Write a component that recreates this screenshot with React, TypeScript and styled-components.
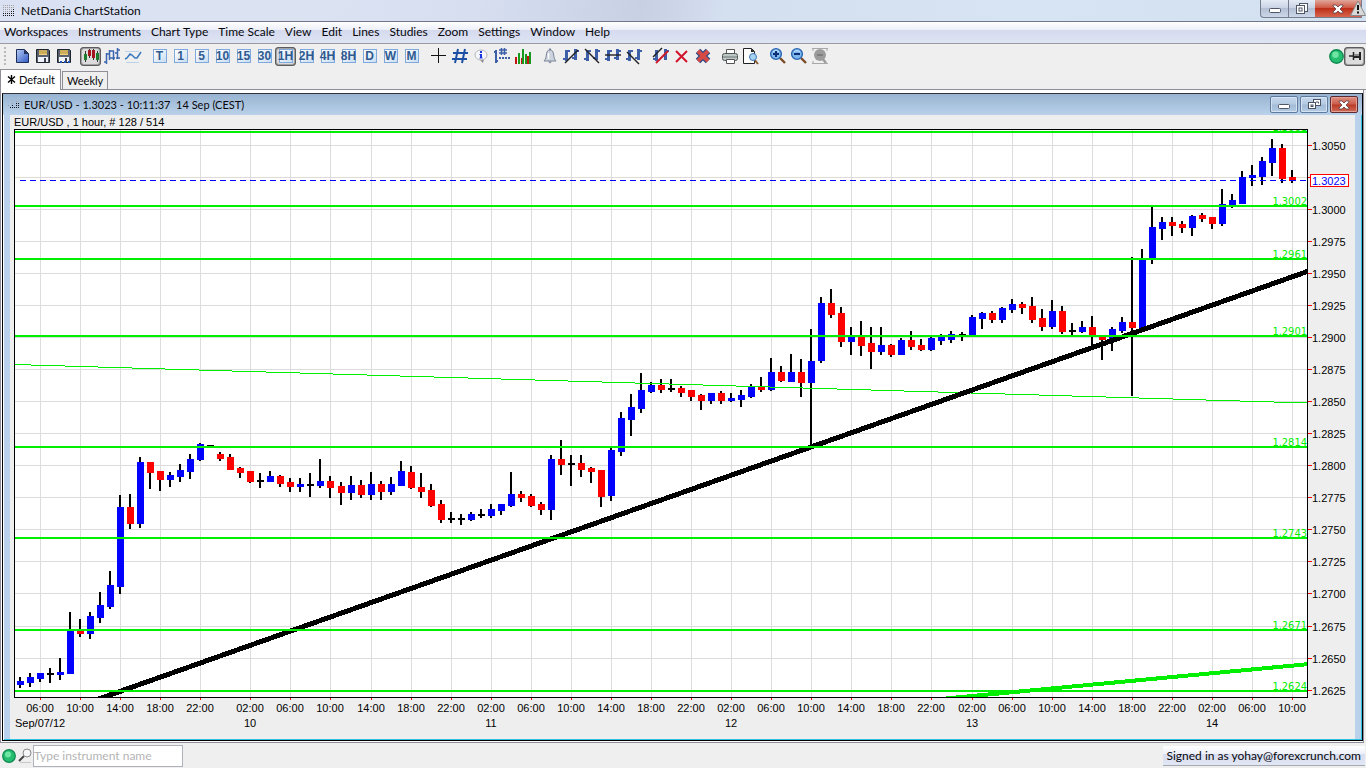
import React from 'react';
import styled, { createGlobalStyle, css } from 'styled-components';

const uiFont = 'Lato, "Open Sans", sans-serif';
const chartFont = '"Liberation Sans", Arial, sans-serif';

const GlobalStyle = createGlobalStyle`
  *, *::before, *::after { box-sizing: border-box; }
  body { margin: 0; background: #efefef; }
  button, input { font: inherit; color: inherit; margin: 0; }
`;

const Shell = styled.div`
  display: flex;
  flex-direction: column;
  min-height: 100vh;
  background: #efefef;
  color: #08080c;
  font: 12px/16px ${uiFont};
`;

const TitleBar = styled.header`
  display: flex;
  align-items: flex-start;
  height: 22px;
  padding-left: 3px;
  border-bottom: 1px solid #70758a;
  background: linear-gradient(100deg, #d9e1f2 0%, #dbe3f3 22%, #d6def0 35%, #c8d0e4 47%, #d4dff0 53%, #d7e4f3 75%, #d3e0f0 100%);
`;

const AppTitle = styled.h1`
  flex: 1;
  margin: 3px 0 0 6px;
  font-size: 12px;
  font-weight: 400;
  line-height: 16px;
`;

const WindowButtons = styled.div`
  position: relative;
  display: flex;
  height: 18px;
  padding-right: 4px;
`;

const WindowButton = styled.button<{ $w: number; $danger?: boolean }>`
  display: flex;
  align-items: center;
  justify-content: center;
  width: ${p => p.$w}px;
  height: 18px;
  padding: 0;
  border: 1px solid #747c8e;
  border-top: 0;
  border-left-width: ${p => (p.$danger ? 0 : 1)}px;
  border-right-width: ${p => (p.$danger ? 1 : 0)}px;
  background: ${p =>
    p.$danger
      ? 'linear-gradient(#e0a79c, #cf5a45 45%, #bd2f18 50%, #d8654e)'
      : 'linear-gradient(#e4ebf6, #c9d3e4 45%, #b3bfd4 50%, #ccd7e8)'};
  &:first-child { border-bottom-left-radius: 4px; }
`;

const Warning = styled.svg`
  position: absolute;
  right: 0;
  top: 0;
`;

const MenuBar = styled.nav`
  display: flex;
  align-items: center;
  gap: 10px;
  height: 22px;
  padding: 0 4px 1px;
  border-bottom: 1px solid #9a9aa2;
  background: linear-gradient(#ffffff, #eef0f9 36%, #d5daee 40%, #dfe4f4 100%);
`;

const MenuItem = styled.button`
  padding: 0;
  border: 0;
  background: none;
  line-height: 20px;
  white-space: nowrap;
`;

const ToolBar = styled.div`
  display: flex;
  align-items: center;
  gap: 6px;
  height: 25px;
  padding: 0 1px 1px 4px;
`;

const Grip = styled.span`
  width: 2px;
  height: 19px;
  margin-right: -1px;
  background: repeating-linear-gradient(#b9b9b9 0 2px, transparent 2px 4px);
`;

const ToolGroup = styled.div<{ $end?: boolean }>`
  display: flex;
  align-items: center;
  ${p => p.$end && css`margin-left: auto;`}
`;

const ToolButton = styled.button<{ $on?: boolean }>`
  display: flex;
  align-items: center;
  justify-content: center;
  width: 21px;
  height: 19px;
  padding: 0;
  border: 0;
  border-radius: 4px;
  background: ${p => (p.$on ? '#dcdcdc' : 'none')};
  box-shadow: ${p => (p.$on ? 'inset 0 0 0 1px #5c5c5c, inset 0 0 0 2px #a2a2a2' : 'none')};
`;

const PeriodTile = styled.span`
  display: flex;
  justify-content: center;
  width: 14px;
  height: 14px;
  border: 1px solid #7fa9dc;
  background: linear-gradient(135deg, #ffffff, #c9ddf2);
  color: #2f5a90;
  font: 700 12px/12px ${chartFont};
`;

const TabStrip = styled.div`
  display: flex;
  align-items: flex-end;
  height: 21px;
  box-shadow: inset 0 -1px 0 #8e8f98;
`;

const Tab = styled.button<{ $active?: boolean }>`
  display: flex;
  align-items: center;
  gap: 3px;
  height: 19px;
  margin-left: 1px;
  padding: 1px 4px 0;
  font-size: 11px;
  line-height: 16px;
  border: 1px solid #8e8f98;
  background: #efefef;
  ${p =>
    p.$active &&
    css`
      height: 21px;
      margin-left: 0;
      padding: 0 5px 1px 6px;
      border-bottom: 0;
      background: #fff;
    `}
`;

const Workspace = styled.main`
  flex: 1;
  display: flex;
  margin-right: 2px;
  padding: 3px 0 1px 1px;
  border: 1px solid #8e8f98;
  border-top: 0;
  background: #fff;
`;

const ChartWindow = styled.section`
  flex: 1;
  display: flex;
  flex-direction: column;
  border: 1px solid #000;
  border-top-color: #30333c;
  background: #b9d1ea;
  box-shadow: inset 1px 0 0 #fff, inset -1px -1px 0 #2cc3e0;
`;

const ChartHeader = styled.div`
  display: flex;
  align-items: center;
  height: 21px;
  padding: 0 4px 0 5px;
  background: linear-gradient(#99b4d1, #b9d1ea);
`;

const ChartTitle = styled.h2`
  flex: 1;
  margin: 0 0 0 4px;
  font-size: 11px;
  font-weight: 400;
  line-height: 20px;
  white-space: pre;
`;

const FrameButton = styled.button<{ $danger?: boolean }>`
  display: flex;
  align-items: center;
  justify-content: center;
  width: 28px;
  height: 17px;
  margin-left: 2px;
  padding: 0;
  border: 1px solid ${p => (p.$danger ? '#5d2a30' : '#5f7a9c')};
  border-radius: 2px;
  box-shadow: inset 0 0 0 1px ${p => (p.$danger ? '#e2a096' : '#d5e4f3')};
  background: ${p =>
    p.$danger
      ? 'linear-gradient(#dd9083, #cd5c4a 48%, #b83a27 52%, #cf6a55)'
      : 'linear-gradient(#c6d8ec, #b5cae2 48%, #a2bad6 52%, #b5cbe4)'};
`;

const ChartBody = styled.div`
  flex: 1;
  margin: 0 7px 1px;
  background: #eeeeee;
`;

const ChartSvg = styled.svg`
  display: block;
  width: 100%;
  height: auto;
  font: 11px ${chartFont};
`;

const StatusBar = styled.footer`
  display: flex;
  align-items: center;
  height: 25px;
  padding: 0 1px 0 2px;
`;

const SearchLabel = styled.label`
  display: flex;
  margin: 0 0 0 2px;
`;

const SearchInput = styled.input`
  width: 150px;
  height: 22px;
  padding: 0;
  border: 1px solid #aeb0ba;
  background: #fff;
  outline: 0;
  &::placeholder { color: #b4b4b4; opacity: 1; }
`;

const Account = styled.span`
  margin-left: auto;
  height: 20px;
  padding: 0 4px;
  line-height: 20px;
  border-bottom: 1px solid #a6a8b2;
  background: linear-gradient(#ffffff, #eef0f9 40%, #d9def0 45%, #e2e7f5);
`;

const menus = ['Workspaces', 'Instruments', 'Chart Type', 'Time Scale', 'View', 'Edit', 'Lines', 'Studies', 'Zoom', 'Settings', 'Window', 'Help'];
const periods = ['T', '1', '5', '10', '15', '30', '1H', '2H', '4H', '8H', 'D', 'W', 'M'];

/* ---------- icons ---------- */

const Icon = ({ children }: { children: React.ReactNode }) => (
  <svg width="18" height="18" viewBox="0 0 18 18" fill="none" aria-hidden="true">
    {children}
  </svg>
);

const Dots = ({ rows }: { rows: string[] }) => (
  <svg width="12" height={rows.length * 2} viewBox={`0 0 12 ${rows.length * 2}`} shapeRendering="crispEdges" aria-hidden="true">
    {rows.flatMap((r, y) =>
      r.split('').map((c, x) =>
        c === '.' ? null : <rect key={`${x}-${y}`} x={x * 2} y={y * 2} width="1" height="1" fill={c === '#' ? '#16161c' : '#a09a98'} />
      )
    )}
  </svg>
);

const Floppy = ({ dots }: { dots?: boolean }) => (
  <Icon>
    <path d="M2.5 2.5h12l1 1v12h-13z" fill="#59616e" stroke="#1d2430" />
    <path d="M5 3h8v5H5z" fill="#f0d27a" />
    <path d="M5 4h8M5 6h8" stroke="#a98a3a" />
    <path d="M4 10h10v5H4z" fill="#eef2f8" />
    <path d="M10 11h2v4h-2z" fill="#39404e" />
    {dots && <path d="M5 14h2v2H5zM9 14h2v2H9zM13 14h2v2h-2z" fill="#1f56b8" />}
  </Icon>
);

const Bars = ({ line }: { line: string }) => (
  <Icon>
    <path d="M3 3h3v11H3zM12 2h3v11h-3z" fill="#3c5fa8" />
    <path d="M1 11h3v2H1zM6 3h2v2H6zM10 10h3v2h-3zM15 3h2v2h-2z" fill="#3c5fa8" />
    <path d={line} stroke="#222" strokeWidth="1.4" />
  </Icon>
);

const Lens = ({ sign }: { sign: string }) => (
  <Icon>
    <path d="M11 11l5 5" stroke="#7b4a26" strokeWidth="2.4" />
    <circle cx="7" cy="7" r="5.4" fill="#7db7ee" stroke="#2c66b2" strokeWidth="1.4" />
    <path d="M4 5a4 4 0 0 1 6 0" stroke="#cfe8ff" />
    <path d={sign} stroke="#0c2f78" strokeWidth="2" />
  </Icon>
);

const Ball = ({ size }: { size: number }) => (
  <svg width={size} height={size} viewBox="0 0 14 14" aria-hidden="true">
    <circle cx="7" cy="7" r="6.3" fill="#25bd70" stroke="#0e8a50" strokeWidth="1.2" />
    <circle cx="6" cy="5.4" r="3" fill="#6fe5a4" />
  </svg>
);

const MinGlyph = () => (
  <svg width="12" height="10" viewBox="0 0 12 10" aria-hidden="true">
    <rect x="0.5" y="4.5" width="11" height="4" rx="1" fill="#fff" stroke="#4f5666" />
  </svg>
);

const RestoreGlyph = () => (
  <svg width="12" height="12" viewBox="0 0 12 12" fill="#fff" stroke="#4f5666" aria-hidden="true">
    <rect x="3.5" y="0.5" width="8" height="8" />
    <rect x="0.5" y="2.5" width="8" height="8" />
    <rect x="3" y="5" width="3" height="3" />
  </svg>
);

const CascadeGlyph = () => (
  <svg width="13" height="11" viewBox="0 0 13 11" fill="#fff" stroke="#4a5364" aria-hidden="true">
    <rect x="5.5" y="0.5" width="7" height="6" />
    <path d="M8 3h2.500v1.500" fill="none" />
    <rect x="0.5" y="3.5" width="7" height="6" />
    <rect x="3" y="6" width="2" height="1.500" />
  </svg>
);

const CloseGlyph = () => (
  <svg width="12" height="10" viewBox="0 0 12 10" aria-hidden="true">
    <path d="M1 1h3l2 2 2-2h3v1L8 5l3 3v1H8L6 7 4 9H1V8l3-3-3-3z" fill="#fff" stroke="#5a3a44" strokeWidth="0.8" />
  </svg>
);

const fileTools = [
  { name: 'New workspace', icon: <Icon><defs><linearGradient id="pg" x1="0" y1="0" x2="1" y2="1"><stop offset="0" stopColor="#b7cdf5" /><stop offset="1" stopColor="#2f58c4" /></linearGradient></defs><path d="M3.500 2.500h8l4 4v9h-12z" fill="url(#pg)" stroke="#1c2c58" /><path d="M11 2.500V7h4.500z" fill="#26345c" /></Icon> },
  { name: 'Save', icon: <Floppy /> },
  { name: 'Save as', icon: <Floppy dots /> },
];

const styleTools = [
  { name: 'Candlesticks', on: true, icon: <Icon><path d="M3.500 4v11M7.500 2v9M11.500 2v11M15.500 4v11" stroke="#333" /><path d="M2 7h3v6H2zM14 6h3v7h-3z" fill="#1d7d2c" /><path d="M6 3h3v6H6zM10 3h3v8h-3z" fill="#a3161d" /></Icon> },
  { name: 'Bars', icon: <Icon><path d="M3.500 6v11M1 15h3M4 7h3M6.500 3v10M6 11h3M6 4h5M10.500 4v9M9 11h3M12 6h2M14.500 1v11M13 11h4M14 3h3" stroke="#3c66b0" strokeWidth="1.500" /></Icon> },
  { name: 'Line', icon: <Icon><path d="M1 12l2-1 3-4 2 1 3 3h2l4-6" stroke="#3a78bd" strokeWidth="1.500" /><path d="M1 4.500h14M2 15.500h13" stroke="#bdd2e8" /></Icon> },
];

const viewTools = [
  { name: 'Crosshair', icon: <Icon><path d="M1 8.500h15M8.500 1v15" stroke="#111" shapeRendering="crispEdges" /></Icon> },
  { name: 'Grid', icon: <Icon><path d="M7 2L4 16M14 2l-3 14M2 6h15M1 12h15" stroke="#1c50a4" strokeWidth="2" /></Icon> },
  { name: 'Info', icon: <Icon><path d="M8 13l3 3 1-4z" fill="#888" /><ellipse cx="9" cy="8" rx="6" ry="5" fill="#f6f6fb" stroke="#b5b5bf" /><path d="M9 4v2M9 7v4" stroke="#1637e0" strokeWidth="2" /><path d="M7.500 7.500H9M7.500 11h3" stroke="#1637e0" /></Icon> },
  { name: 'Axis labels', icon: <Icon><path d="M3 3v13M1 5h2M3 14h2" stroke="#3c5fa8" strokeWidth="2" /><path d="M8.500 1v7M11.500 1v7M6 3h8M6 6h8" stroke="#3c5fa8" strokeWidth="1.500" /><path d="M6 11h11" stroke="#3c5fa8" strokeWidth="2" strokeDasharray="2 1" /></Icon> },
  { name: 'Volume', icon: <Icon><g shapeRendering="crispEdges"><path d="M1 10h2v7H1zM7 11h2v6H7zM13 9h2v8h-2z" fill="#c41414" /><path d="M4 6h2v11H4zM8 2h2v15H8zM11 7h2v10h-2zM15 5h2v12h-2z" fill="#189a1c" /></g></Icon> },
];

const lineTools = [
  { name: 'Alert', icon: <Icon><path d="M3 14c2-2 2-4 2.500-7C6 4 7 3 9 3s3 1 3.500 4c.5 3 .5 5 2.500 7z" fill="#ccd3de" stroke="#7a8698" /><path d="M9 1.500V3" stroke="#7a8698" strokeWidth="2" /><path d="M7 14.500h4l-2 2z" fill="#7a8698" /><path d="M7.500 6v6" stroke="#fff" strokeWidth="1.500" /></Icon> },
  { name: 'Rising trend', icon: <Bars line="M3 16L16 3" /> },
  { name: 'Falling trend', icon: <Bars line="M2 2l14 14" /> },
  { name: 'Horizontal line', icon: <Bars line="M1 8h16" /> },
  { name: 'Ray', icon: <Bars line="M2 5l12 12" /> },
];

const eraseTools = [
  { name: 'Remove line', icon: <Icon><path d="M3 3h3v11H3zM12 2h3v11h-3z" fill="#3c5fa8" /><path d="M1 11h3v2H1zM15 3h2v2h-2z" fill="#3c5fa8" /><path d="M1 10L10 1" stroke="#222" strokeWidth="1.400" /><path d="M4 16L16 4" stroke="#d01a2c" strokeWidth="2" /></Icon> },
  { name: 'Delete', icon: <Icon><path d="M3 4l11 11M14 4L3 15" stroke="#d2142c" strokeWidth="2" /></Icon> },
  { name: 'Delete all', icon: <Icon><path d="M4 4l10 10M14 4L4 14" stroke="#27488c" strokeWidth="6.500" /><path d="M4 4l10 10M14 4L4 14" stroke="#d44a44" strokeWidth="4" /></Icon> },
];

const printTools = [
  { name: 'Print', icon: <Icon><path d="M5.500 2.500h8v4h-8z" fill="#fff" stroke="#555" /><rect x="1.500" y="6.500" width="15" height="7" rx="2" fill="#bcc6c4" stroke="#4e5654" /><path d="M2 10h14" stroke="#6f7a78" /><path d="M5.500 12.500h8v4h-8z" fill="#fff" stroke="#555" /></Icon> },
  { name: 'Print preview', icon: <Icon><path d="M1.500 1.500h8l3 3v12h-11z" fill="#fff" stroke="#222" /><path d="M9 1.500V5h3.500z" fill="#222" /><path d="M12 12l4 5" stroke="#8a5a34" strokeWidth="2" /><circle cx="11" cy="10" r="3.500" fill="#a8d2f2" stroke="#3a79b8" /></Icon> },
];

const zoomTools = [
  { name: 'Zoom in', icon: <Lens sign="M4 7h6M7 4v6" /> },
  { name: 'Zoom out', icon: <Lens sign="M4 7h6" /> },
  { name: 'Reset zoom', icon: <Icon><path d="M11 11l4 5" stroke="#9a9a9a" strokeWidth="2.400" /><circle cx="9" cy="8" r="6" fill="#9c9c9c" /><path d="M6 8h6" stroke="#7e7e7e" strokeWidth="2" /><path d="M1 1.500h16M1 16.500h16M2 1v3M16 1v3M2 16v-2" stroke="#a8a8a8" /></Icon> },
];

type Tool = { name: string; icon: React.ReactNode; on?: boolean };

const Tools = ({ items }: { items: Tool[] }) => (
  <ToolGroup>
    {items.map(t => (
      <ToolButton key={t.name} type="button" aria-label={t.name} $on={t.on}>
        {t.icon}
      </ToolButton>
    ))}
  </ToolGroup>
);

/* ---------- chart ---------- */

// kind (B up, R down, D flat), wick top, wick bottom, body top, body bottom
type Candle = [string, number, number, number, number];
const candles: Candle[] = [
  ['B', 677, 688, 681, 685], ['B', 673, 687, 677, 683], ['B', 673, 682, 673, 679], ['D', 668, 683, 673, 675],
  ['B', 658, 680, 672, 675], ['B', 612, 674, 630, 674], ['R', 619, 637, 630, 634], ['B', 612, 639, 616, 634],
  ['B', 592, 623, 605, 618], ['B', 571, 609, 585, 607], ['B', 495, 594, 507, 587], ['R', 494, 529, 507, 524],
  ['B', 457, 528, 462, 524], ['R', 462, 489, 462, 473], ['R', 471, 491, 471, 480], ['B', 472, 487, 475, 480],
  ['B', 464, 482, 470, 477], ['B', 454, 479, 459, 472], ['B', 443, 461, 444, 460], ['D', 445, 446, 445, 446],
  ['R', 452, 461, 454, 459], ['R', 454, 470, 457, 470], ['R', 467, 478, 468, 473], ['R', 471, 483, 471, 482],
  ['D', 473, 488, 480, 482], ['B', 471, 482, 476, 482], ['R', 475, 487, 476, 484], ['R', 478, 492, 482, 487],
  ['B', 478, 492, 484, 487], ['D', 473, 497, 484, 486], ['B', 459, 488, 481, 486], ['R', 476, 498, 481, 488],
  ['R', 482, 505, 486, 493], ['B', 476, 500, 485, 493], ['R', 480, 498, 485, 495], ['B', 472, 500, 484, 495],
  ['R', 481, 500, 484, 492], ['B', 477, 495, 484, 492], ['B', 461, 486, 471, 486], ['R', 466, 489, 472, 488],
  ['R', 473, 498, 487, 492], ['R', 484, 507, 490, 506], ['R', 500, 523, 504, 520], ['D', 512, 523, 518, 520],
  ['D', 514, 525, 518, 520], ['B', 512, 521, 514, 520], ['D', 509, 518, 514, 516], ['B', 504, 518, 509, 516],
  ['B', 504, 515, 504, 511], ['B', 472, 507, 494, 506], ['R', 491, 502, 494, 498], ['R', 494, 507, 496, 506],
  ['R', 502, 515, 504, 510], ['B', 455, 520, 459, 510], ['R', 440, 475, 459, 465], ['D', 455, 486, 463, 465],
  ['R', 455, 477, 463, 470], ['R', 467, 483, 468, 472], ['R', 470, 507, 470, 497], ['B', 448, 501, 450, 496],
  ['B', 412, 456, 418, 452], ['B', 394, 436, 407, 420], ['B', 373, 413, 390, 409], ['B', 382, 393, 385, 392],
  ['R', 379, 393, 385, 390], ['D', 379, 392, 388, 390], ['R', 386, 397, 388, 393], ['R', 390, 401, 390, 397],
  ['R', 394, 410, 395, 401], ['B', 393, 404, 393, 401], ['R', 391, 404, 393, 401], ['B', 393, 402, 398, 401],
  ['B', 390, 407, 395, 400], ['B', 384, 398, 387, 397], ['R', 377, 392, 386, 390], ['B', 358, 391, 372, 390],
  ['R', 366, 382, 372, 381], ['B', 354, 382, 372, 382], ['R', 359, 397, 372, 383], ['B', 329, 446, 361, 383],
  ['B', 297, 363, 303, 361], ['R', 289, 318, 303, 315], ['R', 307, 347, 313, 342], ['B', 327, 355, 337, 342],
  ['R', 321, 356, 337, 346], ['R', 327, 369, 343, 352], ['B', 327, 355, 345, 352], ['R', 344, 357, 345, 355],
  ['B', 338, 355, 340, 355], ['R', 331, 350, 340, 347], ['R', 339, 351, 345, 350], ['B', 337, 351, 338, 350],
  ['B', 334, 345, 337, 341], ['B', 331, 343, 334, 340], ['D', 332, 341, 334, 336], ['B', 315, 336, 317, 336],
  ['B', 312, 329, 313, 319], ['R', 311, 323, 313, 320], ['B', 307, 323, 308, 320], ['B', 299, 313, 304, 310],
  ['R', 302, 314, 304, 308], ['R', 297, 323, 306, 320], ['R', 309, 331, 318, 327], ['B', 300, 329, 311, 327],
  ['R', 306, 334, 311, 332], ['D', 323, 336, 330, 332], ['B', 321, 333, 327, 332], ['R', 316, 346, 327, 336],
  ['R', 336, 360, 337, 340], ['B', 327, 351, 329, 339], ['B', 317, 333, 322, 331], ['R', 257, 396, 322, 328],
  ['B', 249, 328, 260, 328], ['B', 207, 264, 227, 258], ['B', 217, 240, 222, 229], ['R', 217, 236, 222, 226],
  ['R', 221, 233, 224, 228], ['B', 215, 236, 216, 228], ['R', 213, 222, 215, 219], ['R', 217, 229, 217, 224],
  ['B', 189, 226, 204, 224], ['B', 194, 208, 200, 205], ['B', 171, 204, 177, 204], ['B', 165, 186, 175, 178],
  ['B', 157, 185, 161, 177], ['B', 139, 176, 148, 163], ['R', 144, 183, 148, 179], ['R', 170, 183, 177, 181],
];

const fill: Record<string, string> = { B: '#0000ff', R: '#ff0000', D: '#000000' };
const barX = (i: number) => 20 + Math.round(i * 10.016);
const priceY = (k: number) => Math.floor(145.12 + 32.06 * k);

const hours = ['02:00', '06:00', '10:00', '14:00', '18:00', '22:00'];
const timeTicks = [
  ...[2, 6, 10, 14, 18].map((i, n) => ({ x: barX(i), label: hours[n + 1] })),
  ...Array.from({ length: 27 }, (_, n) => ({ x: barX(23 + n * 4), label: hours[n % 6] })),
];
const dayTicks = [10, 11, 12, 13, 14].map((day, n) => ({ x: barX(23 + n * 24), day }));
const priceTicks = Array.from({ length: 18 }, (_, k) => ({ y: priceY(k), label: (1.305 - k * 0.0025).toFixed(4) }));
const levels: [number, string][] = [
  [131, '1.3061'], [205, '1.3002'], [258, '1.2961'], [335, '1.2901'], [446, '1.2814'], [537, '1.2743'], [629, '1.2671'], [690, '1.2624'],
];

const Chart = () => (
  <ChartSvg viewBox="10 115 1345 623" role="img" aria-label="EUR/USD hourly candlestick chart">
    <defs>
      <clipPath id="plot"><rect x="15" y="130" width="1292" height="567" /></clipPath>
    </defs>
    <text x="14" y="126">EUR/USD , 1 hour, # 128 / 514</text>
    <g shapeRendering="crispEdges">
      <rect x="14" y="129" width="1294" height="569" fill="#000" />
      <rect x="15" y="130" width="1292" height="567" fill="#fff" />
      <g fill="#dcdcdc">
        {timeTicks.map(t => <rect key={t.x} x={t.x} y="130" width="1" height="567" />)}
        {priceTicks.map(p => <rect key={p.y} x="15" y={p.y} width="1292" height="1" />)}
      </g>
      <g fill="#ff0000">
        {timeTicks.map(t => <rect key={t.x} x={t.x} y="698" width="1" height="2" />)}
        {priceTicks.map(p => <rect key={p.y} x="1308" y={p.y} width="4" height="1" />)}
      </g>
      <g clipPath="url(#plot)">
        {candles.map(([kind, wt, wb, bt, bb], i) => (
          <g key={i}>
            {wb - wt > 1 && <rect x={barX(i) - 1} y={wt} width="2" height={wb - wt} />}
            <rect x={barX(i) - 3} y={bt} width="7" height={bb - bt} fill={fill[kind]} />
          </g>
        ))}
        <path d="M14 364.500L1307 403" stroke="#00ee00" />
        <path d="M90 702L1320 267" stroke="#000" strokeWidth="5" />
        <path d="M930 700L1320 663" stroke="#00ee00" strokeWidth="4" />
        {levels.map(([y]) => <rect key={y} x="15" y={y} width="1292" height="2" fill="#00ee00" />)}
        <path d="M20 180.500H1307" stroke="#0000ff" strokeDasharray="6 4" />
      </g>
      <rect x="1310.500" y="174.500" width="38" height="12" fill="#fff" stroke="#ff0000" />
    </g>
    <g fill="#00ee00" textAnchor="end" fontFamily='"DejaVu Sans Condensed", "DejaVu Sans", sans-serif' clipPath="url(#plot)">
      {levels.map(([y, label]) => <text key={label} x="1307" y={y}>{label}</text>)}
    </g>
    <g>
      {priceTicks.map((p, k) => (k === 1 ? null : <text key={p.label} x="1312" y={p.y + 5}>{p.label}</text>))}
      <text x="1312" y="185" fill="#0000ff">1.3023</text>
    </g>
    <g textAnchor="middle">
      {timeTicks.map(t => <text key={t.x} x={t.x} y="712">{t.label}</text>)}
      {dayTicks.map(d => <text key={d.day} x={d.x} y="727">{d.day}</text>)}
    </g>
    <text x="15" y="727">Sep/07/12</text>
  </ChartSvg>
);

export default function App() {
  return (
    <Shell>
      <GlobalStyle />
      <TitleBar>
        <svg width="12" height="20" viewBox="0 0 12 20" shapeRendering="crispEdges" aria-hidden="true">
          {[0, 1, 2, 3, 4, 5].flatMap(y => [0, 1, 2, 3, 4, 5].map(x => (
            <rect key={`${x}-${y}`} x={x * 2} y={5 + y * 2} width="1" height="1" fill={y > 3 || x + y > 6 ? '#15151a' : '#a8a09c'} />
          )))}
        </svg>
        <AppTitle>NetDania ChartStation</AppTitle>
        <WindowButtons>
          <WindowButton type="button" $w={28} aria-label="Minimize"><MinGlyph /></WindowButton>
          <WindowButton type="button" $w={27} aria-label="Restore"><RestoreGlyph /></WindowButton>
          <WindowButton type="button" $w={47} $danger aria-label="Close"><CloseGlyph /></WindowButton>
          <Warning width="16" height="17" viewBox="0 0 16 17" aria-hidden="true">
            <path d="M8 1L15.500 15.500H0.500z" fill="#d9d9d9" stroke="#8a8a8a" />
            <path d="M8 5v5M8 11.500v2" stroke="#111" strokeWidth="2" />
          </Warning>
        </WindowButtons>
      </TitleBar>

      <MenuBar aria-label="Main menu">
        {menus.map(m => <MenuItem key={m} type="button">{m}</MenuItem>)}
      </MenuBar>

      <ToolBar role="toolbar" aria-label="Tools">
        <Grip />
        <Tools items={fileTools} />
        <Tools items={styleTools} />
        <ToolGroup>
          {periods.map(p => (
            <ToolButton key={p} type="button" $on={p === '1H'}>
              <PeriodTile>{p}</PeriodTile>
            </ToolButton>
          ))}
        </ToolGroup>
        <Tools items={viewTools} />
        <Tools items={lineTools} />
        <Tools items={eraseTools} />
        <Tools items={printTools} />
        <Tools items={zoomTools} />
        <ToolGroup $end>
          <Ball size={15} />
          <ToolButton type="button" $on aria-label="Pin toolbar">
            <Icon><path d="M3 9h4M7.500 5v8" stroke="#222" strokeWidth="1.500" /><path d="M8 7h5v4H8z" fill="#8a8a8a" /><path d="M8 10h5" stroke="#222" strokeWidth="2" /><path d="M14 5v8" stroke="#222" strokeWidth="2" /></Icon>
          </ToolButton>
        </ToolGroup>
      </ToolBar>

      <TabStrip>
        <Tab type="button" $active>
          <svg width="9" height="9" viewBox="0 0 9 9" stroke="#000" strokeWidth="1.400" aria-hidden="true">
            <path d="M4.500 0v9M1 1.500l7 6M8 1.500l-7 6" />
          </svg>
          Default
        </Tab>
        <Tab type="button">Weekly</Tab>
      </TabStrip>

      <Workspace>
        <ChartWindow>
          <ChartHeader>
            <Dots rows={['....o.', '..o.##', 'o.#.##', '.#####']} />
            <ChartTitle>{'EUR/USD - 1.3023 - 10:11:37  14 Sep (CEST)'}</ChartTitle>
            <FrameButton type="button" aria-label="Minimize chart"><MinGlyph /></FrameButton>
            <FrameButton type="button" aria-label="Restore chart"><CascadeGlyph /></FrameButton>
            <FrameButton type="button" $danger aria-label="Close chart"><CloseGlyph /></FrameButton>
          </ChartHeader>
          <ChartBody><Chart /></ChartBody>
        </ChartWindow>
      </Workspace>

      <StatusBar>
        <Ball size={14} />
        <SearchLabel htmlFor="instrument" aria-label="Find instrument">
          <svg width="15" height="15" viewBox="0 0 15 15" fill="none" aria-hidden="true">
            <path d="M1 13l5-5" stroke="#444" strokeWidth="2" />
            <circle cx="9" cy="5" r="4" fill="#f4f6f8" stroke="#888" />
            <path d="M2 14.500h11" stroke="#c9c9c9" />
          </svg>
        </SearchLabel>
        <SearchInput id="instrument" type="text" placeholder="Type instrument name" />
        <Account>Signed in as yohay@forexcrunch.com</Account>
      </StatusBar>
    </Shell>
  );
}
